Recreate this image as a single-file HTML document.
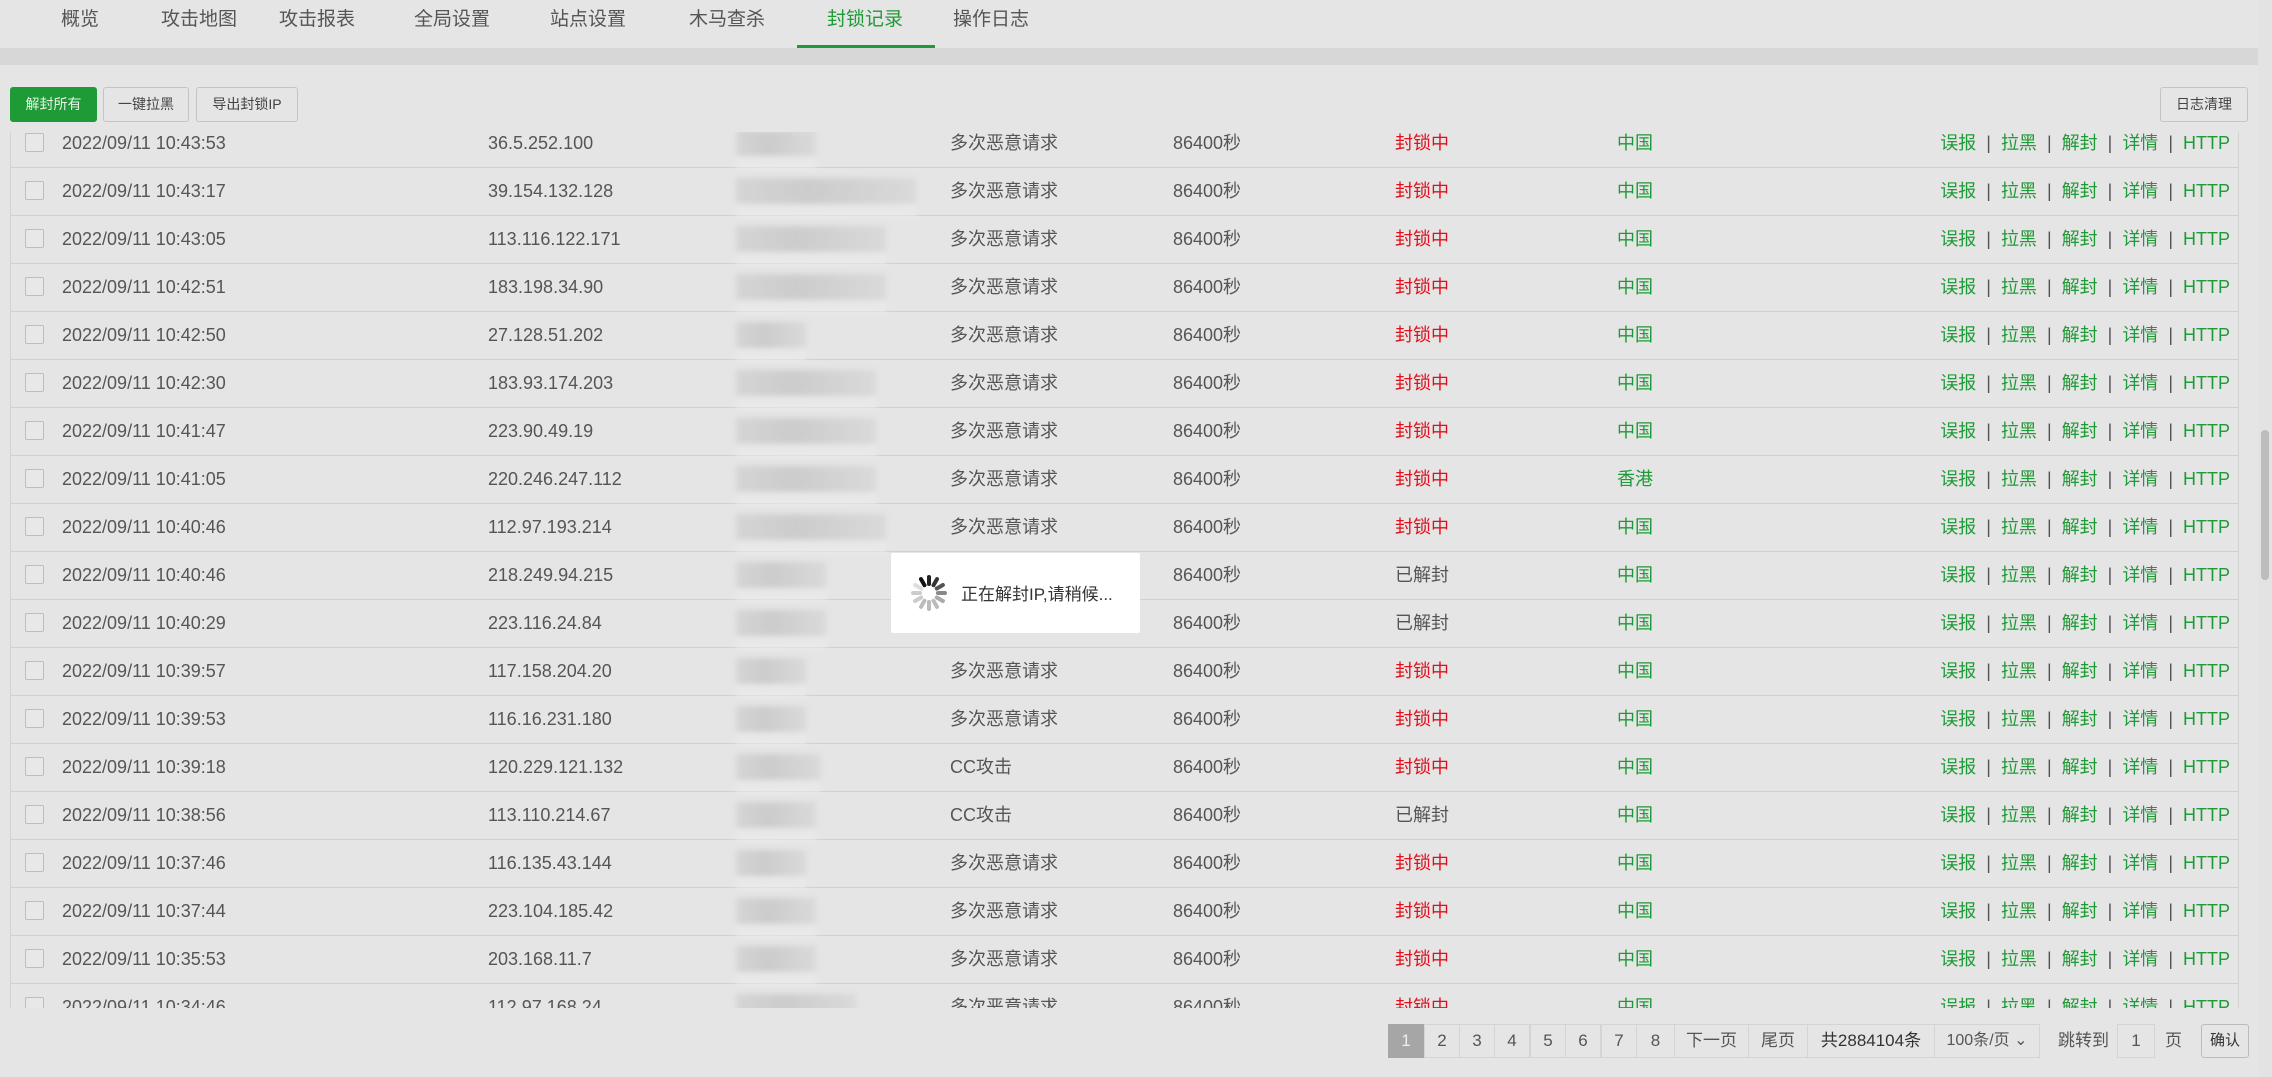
<!DOCTYPE html>
<html><head><meta charset="utf-8"><style>
*{box-sizing:border-box;margin:0;padding:0}
body{width:2272px;height:1077px;background:#e5e5e5;font-family:"Liberation Sans","Noto Sans CJK SC",sans-serif;color:#555;position:relative;overflow:hidden}
.tab{position:absolute;top:4px;font-size:19px;color:#555;transform:translateX(-50%);white-space:nowrap}
.tab.on{color:#1e9a36}
.ul{position:absolute;left:797px;top:45px;width:138px;height:3px;background:#1e9a36}
.band{position:absolute;left:0;top:48px;width:2258px;height:17px;background:#d7d7d7}
.sb{position:absolute;left:2258px;top:0;width:14px;height:1077px;background:#e3e3e3}
.thumb{position:absolute;left:2261px;top:430px;width:8px;height:150px;background:#bdbdbd;border-radius:4px}
.btn{position:absolute;top:87px;height:35px;border:1px solid #c4c4c4;border-radius:3px;background:#e5e5e5;font-size:14px;line-height:33px;text-align:center;color:#444}
.btn.g{background:#1e9a36;border-color:#1e9a36;color:#e8f4ea}
.tbl{position:absolute;left:10px;top:132px;width:2229px;height:876px;overflow:hidden;border-left:1px solid #d2d2d2;border-right:1px solid #d2d2d2}
.rows{position:absolute;left:0;top:-12px;width:100%}
.r{position:relative;height:48px;border-bottom:1px solid #d0d0d0;font-size:18px;line-height:47px;white-space:nowrap}
.r span{position:absolute;top:0}
.cb{position:absolute;left:14px;top:13px;width:19px;height:19px;border:1px solid #bdbdbd;border-radius:2px;background:#e8e8e8}
.t{left:51px}.ip{left:477px}.rs{left:939px}.d{left:1162px}.s{left:1384px}.s.red{color:#e0101a}.reg{left:1606px;color:#1e9a36}
.a{right:8px;color:#1e9a36}.a i{font-style:normal;color:#555;margin:0 10px}
.blur{position:absolute;left:725px;top:10px;height:26px;width:100px;background:linear-gradient(90deg,#d0d0d0,#c4c4c4 40%,#d6d6d6);filter:blur(3px);opacity:.75;box-shadow:0 14px 0 #eaeaea}
.pg{position:absolute;top:1024px;height:34px;border:1px solid #d4d4d4;background:#e5e5e5;font-size:17px;line-height:32px;text-align:center;color:#555}
.load{position:absolute;left:891px;top:553px;width:249px;height:80px;background:#fff;border-radius:2px}
.load span{position:absolute;left:70px;top:27px;font-size:17px;color:#333;white-space:nowrap}
</style></head><body>
<div class="tab" style="left:80px">概览</div>
<div class="tab" style="left:199px">攻击地图</div>
<div class="tab" style="left:317px">攻击报表</div>
<div class="tab" style="left:452px">全局设置</div>
<div class="tab" style="left:588px">站点设置</div>
<div class="tab" style="left:727px">木马查杀</div>
<div class="tab on" style="left:865px">封锁记录</div>
<div class="tab" style="left:991px">操作日志</div>
<div class="ul"></div>
<div class="band"></div>
<div class="sb"></div><div class="thumb"></div>
<div class="btn g" style="left:10px;width:87px">解封所有</div>
<div class="btn" style="left:103px;width:86px">一键拉黑</div>
<div class="btn" style="left:196px;width:102px">导出封锁IP</div>
<div class="btn" style="left:2160px;width:88px">日志清理</div>

<div class="tbl"><div class="rows">
<div class="r"><div class="cb"></div><span class="t">2022/09/11 10:43:53</span><span class="ip">36.5.252.100</span><div class="blur" style="width:80px"></div><span class="rs">多次恶意请求</span><span class="d">86400秒</span><span class="s red">封锁中</span><span class="reg">中国</span><span class="a">误报<i>|</i>拉黑<i>|</i>解封<i>|</i>详情<i>|</i>HTTP</span></div>
<div class="r"><div class="cb"></div><span class="t">2022/09/11 10:43:17</span><span class="ip">39.154.132.128</span><div class="blur" style="width:180px"></div><span class="rs">多次恶意请求</span><span class="d">86400秒</span><span class="s red">封锁中</span><span class="reg">中国</span><span class="a">误报<i>|</i>拉黑<i>|</i>解封<i>|</i>详情<i>|</i>HTTP</span></div>
<div class="r"><div class="cb"></div><span class="t">2022/09/11 10:43:05</span><span class="ip">113.116.122.171</span><div class="blur" style="width:150px"></div><span class="rs">多次恶意请求</span><span class="d">86400秒</span><span class="s red">封锁中</span><span class="reg">中国</span><span class="a">误报<i>|</i>拉黑<i>|</i>解封<i>|</i>详情<i>|</i>HTTP</span></div>
<div class="r"><div class="cb"></div><span class="t">2022/09/11 10:42:51</span><span class="ip">183.198.34.90</span><div class="blur" style="width:150px"></div><span class="rs">多次恶意请求</span><span class="d">86400秒</span><span class="s red">封锁中</span><span class="reg">中国</span><span class="a">误报<i>|</i>拉黑<i>|</i>解封<i>|</i>详情<i>|</i>HTTP</span></div>
<div class="r"><div class="cb"></div><span class="t">2022/09/11 10:42:50</span><span class="ip">27.128.51.202</span><div class="blur" style="width:70px"></div><span class="rs">多次恶意请求</span><span class="d">86400秒</span><span class="s red">封锁中</span><span class="reg">中国</span><span class="a">误报<i>|</i>拉黑<i>|</i>解封<i>|</i>详情<i>|</i>HTTP</span></div>
<div class="r"><div class="cb"></div><span class="t">2022/09/11 10:42:30</span><span class="ip">183.93.174.203</span><div class="blur" style="width:140px"></div><span class="rs">多次恶意请求</span><span class="d">86400秒</span><span class="s red">封锁中</span><span class="reg">中国</span><span class="a">误报<i>|</i>拉黑<i>|</i>解封<i>|</i>详情<i>|</i>HTTP</span></div>
<div class="r"><div class="cb"></div><span class="t">2022/09/11 10:41:47</span><span class="ip">223.90.49.19</span><div class="blur" style="width:140px"></div><span class="rs">多次恶意请求</span><span class="d">86400秒</span><span class="s red">封锁中</span><span class="reg">中国</span><span class="a">误报<i>|</i>拉黑<i>|</i>解封<i>|</i>详情<i>|</i>HTTP</span></div>
<div class="r"><div class="cb"></div><span class="t">2022/09/11 10:41:05</span><span class="ip">220.246.247.112</span><div class="blur" style="width:140px"></div><span class="rs">多次恶意请求</span><span class="d">86400秒</span><span class="s red">封锁中</span><span class="reg">香港</span><span class="a">误报<i>|</i>拉黑<i>|</i>解封<i>|</i>详情<i>|</i>HTTP</span></div>
<div class="r"><div class="cb"></div><span class="t">2022/09/11 10:40:46</span><span class="ip">112.97.193.214</span><div class="blur" style="width:150px"></div><span class="rs">多次恶意请求</span><span class="d">86400秒</span><span class="s red">封锁中</span><span class="reg">中国</span><span class="a">误报<i>|</i>拉黑<i>|</i>解封<i>|</i>详情<i>|</i>HTTP</span></div>
<div class="r"><div class="cb"></div><span class="t">2022/09/11 10:40:46</span><span class="ip">218.249.94.215</span><div class="blur" style="width:90px"></div><span class="rs">多次恶意请求</span><span class="d">86400秒</span><span class="s">已解封</span><span class="reg">中国</span><span class="a">误报<i>|</i>拉黑<i>|</i>解封<i>|</i>详情<i>|</i>HTTP</span></div>
<div class="r"><div class="cb"></div><span class="t">2022/09/11 10:40:29</span><span class="ip">223.116.24.84</span><div class="blur" style="width:90px"></div><span class="rs">多次恶意请求</span><span class="d">86400秒</span><span class="s">已解封</span><span class="reg">中国</span><span class="a">误报<i>|</i>拉黑<i>|</i>解封<i>|</i>详情<i>|</i>HTTP</span></div>
<div class="r"><div class="cb"></div><span class="t">2022/09/11 10:39:57</span><span class="ip">117.158.204.20</span><div class="blur" style="width:70px"></div><span class="rs">多次恶意请求</span><span class="d">86400秒</span><span class="s red">封锁中</span><span class="reg">中国</span><span class="a">误报<i>|</i>拉黑<i>|</i>解封<i>|</i>详情<i>|</i>HTTP</span></div>
<div class="r"><div class="cb"></div><span class="t">2022/09/11 10:39:53</span><span class="ip">116.16.231.180</span><div class="blur" style="width:70px"></div><span class="rs">多次恶意请求</span><span class="d">86400秒</span><span class="s red">封锁中</span><span class="reg">中国</span><span class="a">误报<i>|</i>拉黑<i>|</i>解封<i>|</i>详情<i>|</i>HTTP</span></div>
<div class="r"><div class="cb"></div><span class="t">2022/09/11 10:39:18</span><span class="ip">120.229.121.132</span><div class="blur" style="width:85px"></div><span class="rs">CC攻击</span><span class="d">86400秒</span><span class="s red">封锁中</span><span class="reg">中国</span><span class="a">误报<i>|</i>拉黑<i>|</i>解封<i>|</i>详情<i>|</i>HTTP</span></div>
<div class="r"><div class="cb"></div><span class="t">2022/09/11 10:38:56</span><span class="ip">113.110.214.67</span><div class="blur" style="width:80px"></div><span class="rs">CC攻击</span><span class="d">86400秒</span><span class="s">已解封</span><span class="reg">中国</span><span class="a">误报<i>|</i>拉黑<i>|</i>解封<i>|</i>详情<i>|</i>HTTP</span></div>
<div class="r"><div class="cb"></div><span class="t">2022/09/11 10:37:46</span><span class="ip">116.135.43.144</span><div class="blur" style="width:70px"></div><span class="rs">多次恶意请求</span><span class="d">86400秒</span><span class="s red">封锁中</span><span class="reg">中国</span><span class="a">误报<i>|</i>拉黑<i>|</i>解封<i>|</i>详情<i>|</i>HTTP</span></div>
<div class="r"><div class="cb"></div><span class="t">2022/09/11 10:37:44</span><span class="ip">223.104.185.42</span><div class="blur" style="width:80px"></div><span class="rs">多次恶意请求</span><span class="d">86400秒</span><span class="s red">封锁中</span><span class="reg">中国</span><span class="a">误报<i>|</i>拉黑<i>|</i>解封<i>|</i>详情<i>|</i>HTTP</span></div>
<div class="r"><div class="cb"></div><span class="t">2022/09/11 10:35:53</span><span class="ip">203.168.11.7</span><div class="blur" style="width:80px"></div><span class="rs">多次恶意请求</span><span class="d">86400秒</span><span class="s red">封锁中</span><span class="reg">中国</span><span class="a">误报<i>|</i>拉黑<i>|</i>解封<i>|</i>详情<i>|</i>HTTP</span></div>
<div class="r"><div class="cb"></div><span class="t">2022/09/11 10:34:46</span><span class="ip">112.97.168.24</span><div class="blur" style="width:120px"></div><span class="rs">多次恶意请求</span><span class="d">86400秒</span><span class="s red">封锁中</span><span class="reg">中国</span><span class="a">误报<i>|</i>拉黑<i>|</i>解封<i>|</i>详情<i>|</i>HTTP</span></div>
</div></div>

<div class="pg" style="left:1388px;width:36px;background:#a6a6a6;color:#eee;border-color:#a6a6a6">1</div>
<div class="pg" style="left:1424px;width:36px">2</div>
<div class="pg" style="left:1459px;width:36px">3</div>
<div class="pg" style="left:1494px;width:36px">4</div>
<div class="pg" style="left:1530px;width:36px">5</div>
<div class="pg" style="left:1565px;width:36px">6</div>
<div class="pg" style="left:1601px;width:36px">7</div>
<div class="pg" style="left:1636px;width:39px">8</div>
<div class="pg" style="left:1674px;width:75px">下一页</div>
<div class="pg" style="left:1748px;width:60px">尾页</div>
<div class="pg" style="left:1807px;width:128px;color:#333">共2884104条</div>
<div class="pg" style="left:1934px;width:106px;font-size:16px">100条/页 ⌄</div>
<div style="position:absolute;left:2058px;top:1024px;line-height:34px;font-size:17px">跳转到</div>
<div class="pg" style="left:2117px;width:38px">1</div>
<div style="position:absolute;left:2165px;top:1024px;line-height:34px;font-size:17px">页</div>
<div class="pg" style="left:2201px;width:48px;border-radius:3px;border-color:#bbb;font-size:15px;color:#333">确认</div>

<div class="load">
<svg style="position:absolute;left:18px;top:20px" width="40" height="40" viewBox="-20 -20 40 40">
<g stroke-width="4" stroke-linecap="round">
<line x1="0" y1="-16" x2="0" y2="-9" stroke="#222"/>
<line x1="8" y1="-13.9" x2="4.5" y2="-7.8" stroke="#333"/>
<line x1="13.9" y1="-8" x2="7.8" y2="-4.5" stroke="#555"/>
<line x1="16" y1="0" x2="9" y2="0" stroke="#888"/>
<line x1="13.9" y1="8" x2="7.8" y2="4.5" stroke="#aaa"/>
<line x1="8" y1="13.9" x2="4.5" y2="7.8" stroke="#bbb"/>
<line x1="0" y1="16" x2="0" y2="9" stroke="#bbb"/>
<line x1="-8" y1="13.9" x2="-4.5" y2="7.8" stroke="#bbb"/>
<line x1="-13.9" y1="8" x2="-7.8" y2="4.5" stroke="#ccc"/>
<line x1="-16" y1="0" x2="-9" y2="0" stroke="#ccc"/>
<line x1="-13.9" y1="-8" x2="-7.8" y2="-4.5" stroke="#ddd"/>
<line x1="-8" y1="-13.9" x2="-4.5" y2="-7.8" stroke="#111"/>
</g></svg>
<span>正在解封IP,请稍候...</span>
</div>
</body></html>
